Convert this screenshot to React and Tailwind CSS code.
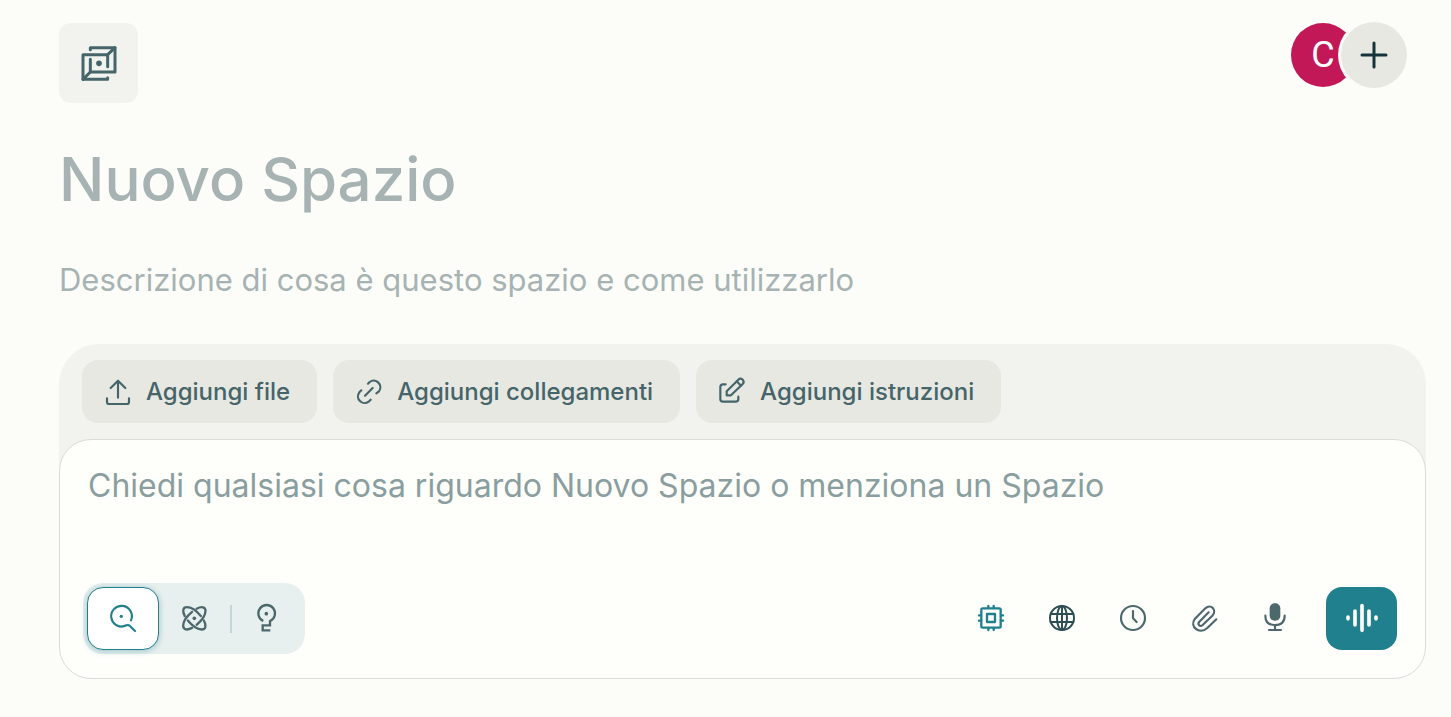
import React from "react";

function Icon({ box = "0 0 96 96", size = "size-8", stroke = 6, className = "", children }) {
  return (
    <svg
      viewBox={box}
      className={`${size} shrink-0 ${className}`}
      fill="none"
      stroke="currentColor"
      strokeWidth={stroke}
      strokeLinecap="round"
      strokeLinejoin="round"
      aria-hidden="true"
    >
      {children}
    </svg>
  );
}

const SpaceIcon = () => (
  <Icon box="0 0 120 120" size="size-10" stroke={9}>
    <path d="M34 20V14H108V87H34V49" />
    <path d="M86 104V109H12V35H86V71" />
    <path d="M86 35L108 14M12 109L34 87" />
    <circle cx="60" cy="61" r="8.5" fill="currentColor" stroke="none" />
  </Icon>
);

const UploadIcon = () => (
  <Icon stroke={6.5}>
    <path d="M48 65V15M26 36L48 14L70 36" />
    <path d="M15 67V78Q15 84 21 84H75Q81 84 81 78V67" />
  </Icon>
);

const LinkIcon = () => (
  <Icon box="38 18 96 96" stroke={6.5}>
    <path d="M74 77L97 54" />
    <path d="M83 41L88 36A20 20 0 0 1 116 64L108 70" />
    <path d="M63 61L57 67A20 20 0 0 0 85 95L91 89" />
  </Icon>
);

const EditIcon = () => (
  <Icon box="0 -1 96 96" stroke={6.5}>
    <path d="M29 24H21Q13 24 13 32V68Q13 76 21 76H59Q67 76 67 68V61" />
    <path d="M32 57V45L67 10Q73 4 80 10Q86 17 80 23L45 57Z" />
    <path d="M62 15L75 28" />
  </Icon>
);

const SearchIcon = () => (
  <Icon box="2 4 96 96" stroke={6.5}>
    <path d="M74 56A31 31 0 1 0 60 71Q66 69 70 72L86 88" />
    <circle cx="45" cy="44" r="5" fill="currentColor" stroke="none" />
  </Icon>
);

const AtomIcon = () => (
  <Icon box="-46 -46 96 96" stroke={7}>
    <g transform="rotate(45)">
      <path d="M25 -15.5A43 19 0 0 1 -9 18.6M-25 15.5A43 19 0 0 1 9 -18.6" />
    </g>
    <g transform="rotate(-45)">
      <path d="M25 -15.5A43 19 0 0 1 -9 18.6M-25 15.5A43 19 0 0 1 9 -18.6" />
    </g>
    <circle cx="0" cy="0" r="5.5" fill="currentColor" stroke="none" />
  </Icon>
);

const BulbIcon = () => (
  <Icon box="2 3 96 96" stroke={7}>
    <path d="M39 57A25 25 0 1 1 59 57V70H37V85H60" strokeLinecap="butt" strokeLinejoin="miter" />
    <circle cx="48" cy="35" r="5.5" fill="currentColor" stroke="none" />
  </Icon>
);

const ChipIcon = () => (
  <Icon box="0 3 96 96" stroke={7}>
    <rect x="19" y="19" width="58" height="58" rx="4" />
    <rect x="36" y="36" width="24" height="24" />
    <path d="M40 18V12M56 18V12M40 84V78M56 84V78M18 40H12M18 56H12M84 40H78M84 56H78" />
  </Icon>
);

const GlobeIcon = () => (
  <Icon box="0 3 96 96" stroke={6}>
    <circle cx="48" cy="48" r="36" />
    <ellipse cx="48" cy="48" rx="15" ry="36" />
    <path d="M14 36H82M14 60H82M48 12V84" />
  </Icon>
);

const ClockIcon = () => (
  <Icon box="0 3 96 96" stroke={6.5}>
    <circle cx="48" cy="48" r="36" />
    <path d="M48 27V49L59 60" />
  </Icon>
);

const ClipIcon = () => (
  <Icon box="-2 3 96 96" stroke={6.5}>
    <path d="M83 52L56 78C32 99 1 74 19 50L50 19C67 4 86 24 71 41L42 69C34 76 25 67 32 59L60 31" />
  </Icon>
);

const MicIcon = () => (
  <Icon box="0 4 96 96" stroke={6.5}>
    <rect x="32" y="5" width="32" height="52" rx="15" fill="currentColor" stroke="none" />
    <path d="M19 42Q19 70 48 70Q77 70 77 42M48 70V84M30 85H66" />
  </Icon>
);

const VoiceIcon = () => (
  <Icon box="0 3 108 108" size="size-9" stroke={11}>
    <path d="M12 51.5V56.5M33 33V75M54 17V91M75 33V75M96 51.5V56.5" />
  </Icon>
);

const sources = [
  ["Aggiungi file", UploadIcon],
  ["Aggiungi collegamenti", LinkIcon],
  ["Aggiungi istruzioni", EditIcon],
];

const tools = [
  ["Modello", ChipIcon, "text-[#21808d]"],
  ["Fonti web", GlobeIcon, "text-[#2d4e54]"],
  ["Cronologia", ClockIcon, "text-[#4d686c]"],
  ["Allega", ClipIcon, "text-[#4d686c]"],
  ["Dettatura", MicIcon, "text-[#4d686c]"],
];

export default function App() {
  return (
    <main className="min-h-screen bg-[#fcfdf9] pt-[22px] pr-[25px] pb-9 pl-[59px] font-['Inter',sans-serif] text-[#45656a]">
      <header className="flex items-start justify-between pr-[19px]">
        <button type="button" aria-label="Icona dello spazio" className="mt-px flex h-20 w-[79px] items-center justify-center rounded-xl bg-[#f2f3ee]">
          <SpaceIcon />
        </button>
        <div className="flex items-center">
          <div className="flex size-16 items-center justify-center rounded-full bg-[#c31857] font-['Roboto',sans-serif] text-4xl text-white">C</div>
          <button type="button" aria-label="Invita" className="-ml-3.5 flex size-[66px] items-center justify-center rounded-full bg-[#e7e8e2] text-[#13343b] ring-3 ring-[#fcfdf9]">
            <Icon stroke={9}>
              <path d="M48 12V84M12 48H84" />
            </Icon>
          </button>
        </div>
      </header>

      <input
        aria-label="Titolo"
        placeholder="Nuovo Spazio"
        className="mt-9 block h-20 w-full bg-transparent text-[60px] leading-none font-medium outline-none placeholder:text-[#a7b3b3]"
      />
      <input
        aria-label="Descrizione"
        placeholder="Descrizione di cosa è questo spazio e come utilizzarlo"
        className="mt-9 block h-12 w-full bg-transparent text-[31px] leading-10 outline-none placeholder:text-[#a7b3b3]"
      />

      <section className="mt-[41px] rounded-[40px] bg-[#f2f3ee]">
        <div className="flex gap-4 px-[23px] py-4">
          {sources.map(([label, Glyph]) => (
            <button key={label} type="button" className="flex h-[63px] items-center gap-3 rounded-2xl bg-[#e7e8e2] pr-[27px] pl-5 text-2xl font-medium whitespace-nowrap">
              <Glyph />
              {label}
            </button>
          ))}
        </div>

        <form className="flex flex-col rounded-[32px] border border-[#d9dcd9] bg-[#fefffb]">
          <textarea
            aria-label="Domanda"
            rows={2}
            placeholder="Chiedi qualsiasi cosa riguardo Nuovo Spazio o menziona un Spazio"
            className="block h-[119px] w-full resize-none bg-transparent px-7 pt-[26px] text-[32px] leading-10 outline-none placeholder:text-[#8a9e9f]"
          />
          <div className="mt-6 mb-6 flex items-center justify-between pr-7 pl-[23px]">
            <div className="flex items-center rounded-[20px] bg-[#e8f0ef] p-1 text-[#4d686c]">
              <button type="button" aria-label="Cerca" aria-pressed="true" className="flex h-[63px] w-[72px] items-center justify-center rounded-2xl border border-[#21808d] bg-white text-[#21808d] shadow-[0_1px_6px_rgba(33,128,141,0.4)]">
                <SearchIcon />
              </button>
              <button type="button" aria-label="Ricerca" className="flex h-[63px] w-[71px] items-center justify-center">
                <AtomIcon />
              </button>
              <span className="h-7 w-0.5 bg-[#c5d5d5]" />
              <button type="button" aria-label="Labs" className="flex h-[63px] w-[69px] items-center justify-center">
                <BulbIcon />
              </button>
            </div>
            <div className="flex items-center">
              {tools.map(([label, Glyph, tone]) => (
                <button key={label} type="button" aria-label={label} className={`flex h-[63px] w-[71px] items-center justify-center ${tone}`}>
                  <Glyph />
                </button>
              ))}
              <button type="button" aria-label="Modalità vocale" className="ml-4 flex h-[63px] w-[71px] items-center justify-center rounded-2xl bg-[#21808d] text-[#fcfdf9]">
                <VoiceIcon />
              </button>
            </div>
          </div>
        </form>
      </section>
    </main>
  );
}
